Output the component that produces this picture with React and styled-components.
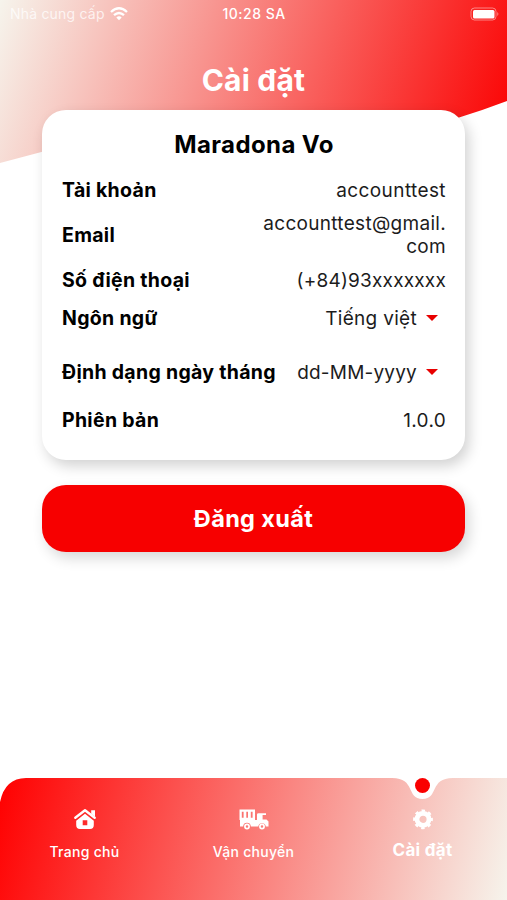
import React from "react";
import styled, { createGlobalStyle } from "styled-components";

const GlobalStyle = createGlobalStyle`
    body {
        margin: 0;
        background-color: white;
        font-family: Inter, "Noto Sans", sans-serif;
    }
`;

const Screen = styled.div`
    position: relative;
    display: flex;
    flex-direction: column;
    height: 900px;
    overflow: hidden;
    background-color: white;
`;

const Backdrop = styled.div`
    position: absolute;
    top: 0;
    left: 0;
    width: 507px;
    height: 163px;
    background: linear-gradient(107.8deg, #f6f4ec, #fb0000);
    clip-path: path("M0 0H507V101Q460 119 400 134L100 138Q50 149 0 163Z");
`;

const StatusBar = styled.div`
    position: relative;
    display: grid;
    grid-template-columns: 1fr auto 1fr;
    align-items: center;
    height: 27px;
    padding: 0 7px 0 10px;
    color: white;
`;

const Carrier = styled.div`
    display: flex;
    align-items: center;
    gap: 5px;
    font-size: 14px;
    letter-spacing: 0.2px;
    color: rgba(255, 255, 255, 0.75);
`;

const Clock = styled.div`
    font-size: 14px;
    font-weight: 500;
    letter-spacing: 0.5px;
    margin-right: 2px;
`;

const BatterySlot = styled.div`
    display: flex;
    justify-content: flex-end;
`;

const Title = styled.h1`
    position: relative;
    margin: 33px 0 0;
    height: 50px;
    line-height: 40px;
    font-size: 30px;
    font-weight: 700;
    letter-spacing: 0.2px;
    text-align: center;
    color: white;
`;

const Card = styled.div`
    position: relative;
    box-sizing: border-box;
    height: 350px;
    margin: 0 42px;
    padding: 14px 19px 0 20px;
    border-radius: 24px;
    background-color: white;
    box-shadow: 4px 6px 14px rgba(0, 0, 0, 0.18);
`;

const Name = styled.h2`
    margin: 0 0 6px;
    line-height: 41px;
    font-size: 24px;
    font-weight: 650;
    letter-spacing: 0.4px;
    text-align: center;
`;

const Row = styled.div`
    display: flex;
    justify-content: space-between;
    align-items: center;
    height: ${props => props.$height || 38}px;
    font-size: 19px;
`;

const Label = styled.div`
    font-weight: 650;
    white-space: nowrap;
    font-size: 19.5px;
    letter-spacing: 0.3px;
`;

const Value = styled.div`
    line-height: 23px;
    text-align: right;
    color: #1c1c1c;
    letter-spacing: ${props => props.$spacing || "0.3px"};
`;

const Select = styled.div`
    display: flex;
    align-items: center;
    gap: 9px;
    padding-right: 8px;
`;

const Arrow = styled.div`
    border-left: 6px solid transparent;
    border-right: 6px solid transparent;
    border-top: 6px solid #e80000;
`;

const Button = styled.button`
    height: 67px;
    margin: 25px 42px 0;
    border: none;
    border-radius: 24px;
    background-color: #f70000;
    box-shadow: 4px 6px 14px rgba(0, 0, 0, 0.16);
    color: white;
    font-family: inherit;
    font-size: 23.5px;
    font-weight: 650;
    letter-spacing: 0.35px;
`;

const TabBar = styled.div`
    position: relative;
    margin-top: auto;
    height: 122px;
`;

const Tabs = styled.div`
    display: grid;
    grid-template-columns: repeat(3, 1fr);
    height: 122px;
    background: linear-gradient(103.5deg, #ff0000, #f6f4ec);
    clip-path: path("M0 122V24Q5 0 26 0H392C416 0 406 21 422.5 21C439 21 429 0 453 0H507V122Z");
`;

const Tab = styled.div`
    display: flex;
    flex-direction: column;
    align-items: center;
    padding-top: 30px;
    color: white;
`;

const TabLabel = styled.div`
    height: 24px;
    line-height: 24px;
    margin-top: ${props => (props.$active ? "8px" : "10px")};
    font-size: ${props => (props.$active ? "17px" : "14px")};
    font-weight: ${props => (props.$active ? 650 : 500)};
    letter-spacing: ${props => (props.$active ? "0.3px" : "0.3px")};
`;

const ActiveDot = styled.div`
    position: absolute;
    top: 0;
    right: 77px;
    width: 15px;
    height: 15px;
    border-radius: 50%;
    background-color: #fa0000;
`;

const WifiIcon = () => (
    <svg width="18" height="14" viewBox="0 0 18 14" fill="none" stroke="white" strokeWidth="2.3">
        <path d="M1 5Q9 -2.4 17 5" />
        <path d="M4 8.2Q9 3.7 14 8.2" />
        <path d="M6.3 10.4Q9 8.3 11.7 10.4L9 13.2Z" fill="white" stroke="none" />
    </svg>
);

const BatteryIcon = () => (
    <svg width="30" height="14" viewBox="0 0 30 14">
        <rect x="1" y="1" width="25" height="12" rx="3.5" fill="none" stroke="white" strokeOpacity="0.45" />
        <rect x="3" y="3" width="21.5" height="8.5" rx="1.5" fill="white" />
        <path d="M27.3 5Q29.5 7 27.3 9Z" fill="white" fillOpacity="0.5" />
    </svg>
);

const HomeIcon = () => (
    <svg width="24" height="22" viewBox="0 0 24 22" fill="white">
        <path d="M2.3 9.8L12 2.2L21.7 9.8" fill="none" stroke="white" strokeWidth="2.4" strokeLinecap="round" strokeLinejoin="round" />
        <path d="M18.2 2.2h3.8v6.6l-3.8-3z" />
        <path fillRule="evenodd" d="M12 5.8L20.8 12.8V17Q20.8 21 17 21H7Q3.2 21 3.2 17V12.8ZM9.7 12.2V17.2H14.3V12.2Z" />
    </svg>
);

const TruckIcon = () => (
    <svg width="30" height="22" viewBox="0 0 30 22" fill="white">
        <path fillRule="evenodd" d="M.5 1.5H16V12H18V6.5Q18 5.2 19.5 5.2H27V7H23.6V11.5H27.5L29.5 13.5V18.5H26.8A3.8 3.8 0 0 0 19.3 18.5H11.8A3.8 3.8 0 0 0 4.2 18.5H1V12H.5ZM2.8 3.8V9.8H4.6V3.8ZM7.3 3.8V9.8H9V3.8ZM11.8 3.8V9.8H13.6V3.8Z" />
        <circle cx="8" cy="18.5" r="2.1" fill="none" stroke="white" strokeWidth="1.7" />
        <circle cx="23" cy="18.5" r="2.1" fill="none" stroke="white" strokeWidth="1.7" />
    </svg>
);

const GearIcon = () => (
    <svg width="22" height="22" viewBox="0 0 22 22">
        <circle cx="11" cy="11.3" r="6" fill="none" stroke="white" strokeWidth="4.8" />
        <circle cx="11" cy="11.3" r="8.4" fill="none" stroke="white" strokeWidth="3" strokeDasharray="3.3 3.3" strokeDashoffset="1.65" />
    </svg>
);

const App = () => {

    return (
        <>
        <GlobalStyle />
        <Screen>
            <Backdrop />
            <StatusBar>
                <Carrier>Nhà cung cấp <WifiIcon /></Carrier>
                <Clock>10:28 SA</Clock>
                <BatterySlot><BatteryIcon /></BatterySlot>
            </StatusBar>
            <Title>Cài đặt</Title>
            <Card>
                <Name>Maradona Vo</Name>
                <Row>
                    <Label>Tài khoản</Label>
                    <Value $spacing="0.4px">accounttest</Value>
                </Row>
                <Row $height={52}>
                    <Label>Email</Label>
                    <Value>accounttest@gmail.<br />com</Value>
                </Row>
                <Row>
                    <Label>Số điện thoại</Label>
                    <Value $spacing="0.2px">(+84)93xxxxxxx</Value>
                </Row>
                <Row>
                    <Label>Ngôn ngữ</Label>
                    <Select><Value>Tiếng việt</Value><Arrow /></Select>
                </Row>
                <Row $height={70}>
                    <Label>Định dạng ngày tháng</Label>
                    <Select><Value $spacing="0.2px">dd-MM-yyyy</Value><Arrow /></Select>
                </Row>
                <Row $height={26}>
                    <Label>Phiên bản</Label>
                    <Value>1.0.0</Value>
                </Row>
            </Card>
            <Button>Đăng xuất</Button>
            <TabBar>
                <Tabs>
                    <Tab><HomeIcon /><TabLabel>Trang chủ</TabLabel></Tab>
                    <Tab><TruckIcon /><TabLabel>Vận chuyển</TabLabel></Tab>
                    <Tab><GearIcon /><TabLabel $active>Cài đặt</TabLabel></Tab>
                </Tabs>
                <ActiveDot />
            </TabBar>
        </Screen>
        </>
    );
}

export default App
